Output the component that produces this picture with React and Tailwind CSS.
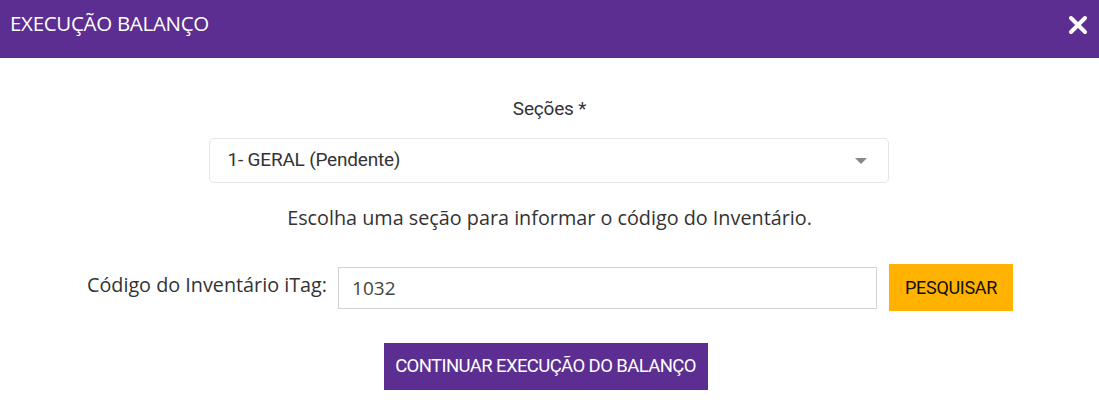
const condensed = { fontFamily: '"Roboto", sans-serif' };

export default function App() {
  return (
    <div className="min-h-[406px] w-[1099px] bg-white font-['Open_Sans',sans-serif] text-[#333]">
      <header className="flex h-[58px] items-start justify-between bg-[#5c2e91] pl-[10px] pr-[10px]">
        <h1 className="mt-[8px] text-[20.5px] font-normal tracking-[-0.3px] text-white">
          EXECUÇÃO BALANÇO
        </h1>
        <button type="button" aria-label="Fechar" className="mt-[15px] mr-[1px] text-white">
          <svg width="20" height="20" viewBox="0 0 20 20">
            <path d="M3 3 L17 17 M17 3 L3 17" stroke="white" strokeWidth="4" strokeLinecap="round" />
          </svg>
        </button>
      </header>

      <div className="flex flex-col items-center pt-[36px]">
        <label className="text-[19px] leading-[30px] tracking-[-0.2px] text-[#333]" style={condensed}>
          Seções *
        </label>

        <div className="mt-[14px] mr-[2px] flex h-[45px] w-[680px] items-center justify-between rounded-[5px] border border-[#e5e5e5] pl-[18px] pr-[21px]">
          <span className="text-[19px] tracking-[-0.2px] text-[#333]" style={condensed}>
            1- GERAL (Pendente)
          </span>
          <span className="h-0 w-0 border-x-[6px] border-t-[6px] border-x-transparent border-t-[#888]" />
        </div>

        <p className="mt-[20px] text-[19.8px] leading-[30px] text-[#333]">
          Escolha uma seção para informar o código do Inventário.
        </p>

        <div className="mt-[31px] ml-[1px] flex items-center">
          <label className="mr-[11px] mb-[6px] text-[19.8px] text-[#333]">Código do Inventário iTag:</label>
          <input
            readOnly
            value="1032"
            className="h-[42px] w-[539px] border border-[#d0d3d8] bg-white px-[13px] text-[19px] text-[#444] outline-none"
          />
          <button
            type="button"
            className="ml-[12px] h-[47px] w-[124px] whitespace-nowrap bg-[#ffb300] text-[18px] tracking-[-0.3px] text-[#111]"
            style={condensed}
          >
            PESQUISAR
          </button>
        </div>

        <button
          type="button"
          className="mt-[32px] mr-[8px] h-[47px] w-[324px] whitespace-nowrap bg-[#5c2e91] text-[18.5px] tracking-[-0.6px] text-white"
          style={condensed}
        >
          CONTINUAR EXECUÇÃO DO BALANÇO
        </button>
      </div>
    </div>
  );
}
